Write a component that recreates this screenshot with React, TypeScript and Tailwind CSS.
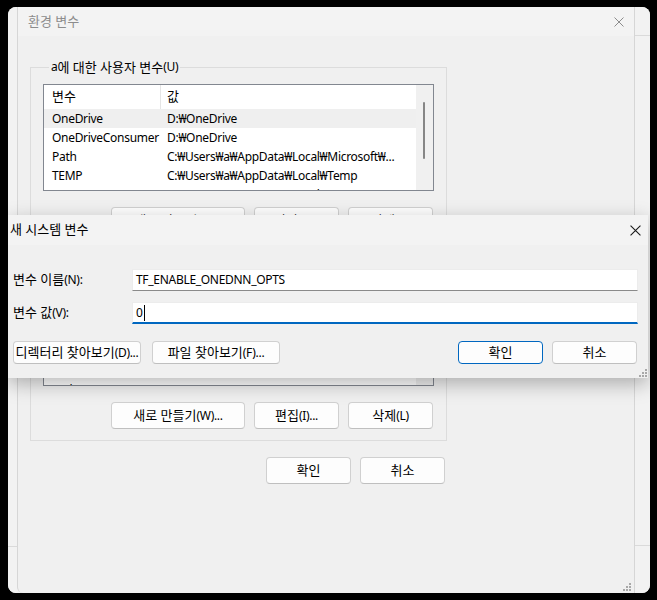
import React from "react";

type Row = { name: string; value: string; selected?: boolean };

const userRows: Row[] = [
  { name: "OneDrive", value: "D:₩OneDrive", selected: true },
  { name: "OneDriveConsumer", value: "D:₩OneDrive" },
  { name: "Path", value: "C:₩Users₩a₩AppData₩Local₩Microsoft₩..." },
  { name: "TEMP", value: "C:₩Users₩a₩AppData₩Local₩Temp" },
  { name: "TMP", value: "C:₩Users₩a₩AppData₩Local₩Temp" },
];

const systemRows: Row[] = [
  { name: "ComSpec", value: "C:₩WINDOWS₩system32₩cmd.exe" },
  { name: "DriverData", value: "C:₩Windows₩System32₩Drivers₩DriverData" },
  { name: "NUMBER_OF_PROCESSORS", value: "16" },
  { name: "OS", value: "Windows_NT" },
  { name: "Path", value: "C:₩WINDOWS₩system32;C:₩WINDOWS;..." },
];

// hangul runs get a slightly larger size so they match Malgun Gothic widths
function k(text: string) {
  const parts = text.split(/([\u3131-\uD7A3]+(?: [\u3131-\uD7A3]+)*)/);
  return parts.map((p, i) =>
    /[\u3131-\uD7A3]/.test(p) ? (
      <span key={i} className="text-[13px] tracking-normal">
        {p}
      </span>
    ) : (
      p
    ),
  );
}

function CloseIcon({ color, size }: { color: string; size: number }) {
  return (
    <svg width={size} height={size} viewBox="0 0 10 10" fill="none">
      <path d="M0.5 0.5 L9.5 9.5 M9.5 0.5 L0.5 9.5" stroke={color} strokeWidth="1" />
    </svg>
  );
}

function Grip() {
  return (
    <svg width="8" height="8" viewBox="0 0 8 8" fill="#a8a8a8">
      <rect x="6" y="0" width="2" height="2" />
      <rect x="3" y="3" width="2" height="2" />
      <rect x="6" y="3" width="2" height="2" />
      <rect x="0" y="6" width="2" height="2" />
      <rect x="3" y="6" width="2" height="2" />
      <rect x="6" y="6" width="2" height="2" />
    </svg>
  );
}

function Btn({
  label,
  className = "",
  primary = false,
}: {
  label: string;
  className?: string;
  primary?: boolean;
}) {
  return (
    <button
      type="button"
      className={
        "flex items-center justify-center whitespace-nowrap rounded-[4px] border bg-[#fdfdfd] text-[12px] text-black " +
        (primary ? "border-[#0067c0] " : "border-[#d0d0d0] border-b-[#bfbfbf] ") +
        className
      }
    >
      {k(label)}
    </button>
  );
}

function VarList({ rows, thumbTop }: { rows: Row[]; thumbTop: number }) {
  return (
    <div className="flex h-[107px] w-[391px] overflow-hidden border border-[#828790] bg-white">
      <div className="min-w-0 flex-1">
        <div className="flex h-[24px] items-center">
          <div className="w-[116px] pl-[8px]">{k("변수")}</div>
          <div className="h-full w-px bg-[#e5e5e5]" />
          <div className="pl-[6px]">{k("값")}</div>
        </div>
        {rows.map((r) => (
          <div
            key={r.name}
            className={"flex h-[19px] items-center whitespace-nowrap " + (r.selected ? "bg-[#efefef]" : "")}
          >
            <div className="w-[117px] overflow-hidden pl-[8px]">{r.name}</div>
            <div className="min-w-0 flex-1 overflow-hidden pl-[6px]">{r.value}</div>
          </div>
        ))}
      </div>
      <div className="w-[17px] bg-[#f0f0f0] pl-[7px]" style={{ paddingTop: thumbTop }}>
        <div className="h-[57px] w-[2px] rounded-full bg-[#868686]" />
      </div>
    </div>
  );
}

function Group({
  title,
  rows,
  buttons,
  className = "",
}: {
  title: string;
  rows: Row[];
  buttons: string[];
  className?: string;
}) {
  return (
    <fieldset className={"w-[417px] border border-[#dcdcdc] px-[12px] pb-[11px] " + className}>
      <legend className="ml-[6px] flex h-[16px] items-center px-[2px] leading-[16px]">{k(title)}</legend>
      <div className="mt-[9px]">
        <VarList rows={rows} thumbTop={17} />
      </div>
      <div className="mt-[16px] flex justify-end gap-[9px] pr-[1px]">
        <Btn className="h-[27px] w-[134px]" label={buttons[0]} />
        <Btn className="h-[27px] w-[85px]" label={buttons[1]} />
        <Btn className="h-[27px] w-[85px]" label={buttons[2]} />
      </div>
    </fieldset>
  );
}

export default function App() {
  return (
    <div className="relative h-[600px] w-[657px] overflow-hidden bg-black text-[12px] tracking-[-0.3px] text-black [font-family:'Noto_Sans','Noto_Sans_CJK_KR',sans-serif]">
      {/* 환경 변수 window */}
      <div className="ml-[8px] mt-[7px] flex h-[586px] w-[642px] overflow-hidden rounded-[8px] bg-[#f0f0f0]">
        <div className="flex w-[9px] flex-col bg-[#f2f2f2]">
          <div className="h-[540px] border-b border-[#dadada]" />
        </div>
        <div className="relative flex w-[618px] flex-col rounded-bl-[6px] border-x border-[#d6d6d6]">
          <div className="flex h-[29px] items-center justify-between bg-[#f3f3f3] pl-[10px] pr-[10px]">
            <span className="text-[#8c8c8c]">{k("환경 변수")}</span>
            <CloseIcon color="#8c8c8c" size={10} />
          </div>
          <div className="pl-[12px] pt-[23px]">
            <Group
              title="a에 대한 사용자 변수(U)"
              rows={userRows}
              buttons={["새로 만들기(N)...", "편집(E)...", "삭제(D)"]}
            />
            <Group
              className="mt-[8px]"
              title="시스템 변수(S)"
              rows={systemRows}
              buttons={["새로 만들기(W)...", "편집(I)...", "삭제(L)"]}
            />
            <div className="mt-[16px] flex w-[417px] justify-end gap-[9px] pr-[2px]">
              <Btn className="h-[27px] w-[85px]" label="확인" />
              <Btn className="h-[27px] w-[85px]" label="취소" />
            </div>
          </div>
          <div className="absolute bottom-[2px] right-[3px]">
            <Grip />
          </div>
        </div>
        <div className="flex w-[15px] flex-col bg-[#f2f2f2]">
          <div className="h-[29px] border-b border-[#dadada]" />
          <div className="h-[510px] border-b border-[#dadada]" />
        </div>
      </div>

      {/* 새 시스템 변수 dialog */}
      <div className="absolute left-[8px] top-[215px] flex h-[163px] w-[640px] flex-col bg-[#f0f0f0] shadow-[0_6px_18px_rgba(0,0,0,0.28)]">
        <div className="flex h-[30px] items-center justify-between bg-[#f3f3f3] pl-[2px] pr-[7px]">
          <span>{k("새 시스템 변수")}</span>
          <CloseIcon color="#1a1a1a" size={11} />
        </div>
        <div className="flex flex-col pl-[5px] pr-[10px]">
          <div className="mt-[24px] flex items-center">
            <div className="w-[119px] whitespace-nowrap">{k("변수 이름(N):")}</div>
            <div className="flex h-[22px] w-[506px] items-center border border-[#ececec] border-b-[#8a8a8a] bg-white pl-[3px]">
              TF_ENABLE_ONEDNN_OPTS
            </div>
          </div>
          <div className="mt-[11px] flex items-center">
            <div className="w-[119px] whitespace-nowrap">{k("변수 값(V):")}</div>
            <div className="flex h-[22px] w-[506px] items-center border border-[#ececec] border-b-2 border-b-[#0067c0] bg-white pl-[3px]">
              0<span className="ml-[1px] h-[16px] w-px bg-black" />
            </div>
          </div>
          <div className="mt-[17px] flex items-center justify-between pr-[1px]">
            <div className="flex gap-[11px]">
              <Btn className="h-[23px] w-[128px]" label="디렉터리 찾아보기(D)..." />
              <Btn className="h-[23px] w-[128px]" label="파일 찾아보기(F)..." />
            </div>
            <div className="flex gap-[9px]">
              <Btn primary className="h-[23px] w-[85px]" label="확인" />
              <Btn className="h-[23px] w-[85px]" label="취소" />
            </div>
          </div>
        </div>
        <div className="absolute bottom-[1px] right-[1px]">
          <Grip />
        </div>
      </div>
    </div>
  );
}
